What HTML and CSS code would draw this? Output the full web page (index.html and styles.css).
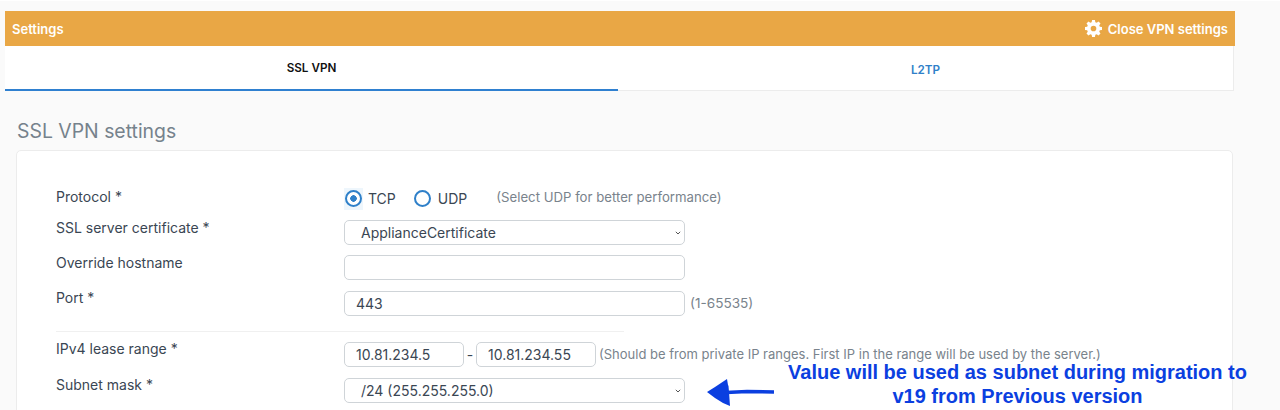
FILE: index.html
```html
<!DOCTYPE html>
<html lang="en">
<head>
<meta charset="utf-8">
<title>Settings</title>
<link rel="stylesheet" href="styles.css">
</head>
<body>
<div class="page">
  <header class="bar">
    <span class="bar-title">Settings</span>
    <span class="bar-close">
      <svg class="gear" viewBox="0 0 24 24" aria-hidden="true"><path fill-rule="evenodd" d="M10 0h4l.6 3.100 1.900.8 2.600-1.800 2.800 2.800-1.800 2.600.8 1.900 3.100.6v4l-3.100.6-.8 1.900 1.800 2.600-2.800 2.800-2.600-1.800-1.900.8L14 24h-4l-.6-3.100-1.900-.8-2.600 1.800-2.800-2.800 1.800-2.600-.8-1.900L0 14v-4l3.100-.6.8-1.900-1.800-2.600 2.800-2.800 2.600 1.800 1.900-.8zM12 8a4 4 0 1 0 0 8 4 4 0 0 0 0-8z"/></svg>
      Close VPN settings
    </span>
  </header>
  <nav class="tabs">
    <a class="tab tab-active">SSL VPN</a>
    <a class="tab tab-other">L2TP</a>
  </nav>
  <h1 class="title">SSL VPN settings</h1>
  <section class="card">
    <div class="row">
      <label class="label">Protocol *</label>
      <div class="control">
        <span class="radio-focus"><span class="radio radio-on"></span></span>
        <span class="radio-text">TCP</span>
        <span class="radio radio-second"></span>
        <span class="radio-text radio-text-wide">UDP</span>
        <span class="hint hint-protocol">(Select UDP for better performance)</span>
      </div>
    </div>
    <div class="row row-cert">
      <label class="label label-up">SSL server certificate *</label>
      <div class="control">
        <div class="field select">ApplianceCertificate<svg class="chev" viewBox="0 0 6 4"><path d="M.8.8 3 3l2.200-2.200" fill="none" stroke="#555" stroke-width="1"/></svg></div>
      </div>
    </div>
    <div class="row row-host">
      <label class="label label-up">Override hostname</label>
      <div class="control"><div class="field"></div></div>
    </div>
    <div class="row row-port">
      <label class="label label-higher">Port *</label>
      <div class="control"><div class="field field-text">443</div><span class="hint hint-port">(1-65535)</span></div>
    </div>
    <hr class="divider">
    <div class="row row-lease">
      <label class="label label-higher">IPv4 lease range *</label>
      <div class="control">
        <div class="field field-text field-small">10.81.234.5</div>
        <span class="dash">-</span>
        <div class="field field-text field-small">10.81.234.55</div>
        <span class="hint hint-lease">(Should be from private IP ranges. First IP in the range will be used by the server.)</span>
      </div>
    </div>
    <div class="row row-mask">
      <label class="label label-higher">Subnet mask *</label>
      <div class="control">
        <div class="field select">/24 (255.255.255.0)<svg class="chev" viewBox="0 0 6 4"><path d="M.8.8 3 3l2.200-2.200" fill="none" stroke="#555" stroke-width="1"/></svg></div>
      </div>
    </div>
  </section>
  <svg class="arrow" viewBox="0 0 68 27" aria-hidden="true"><path d="M0 13 8 8l6-4 6-4 1 6 .5 1 .5 6 .5 7 .5 7-7-3-8-5z" fill="#0b3fe0"/><path d="M19 13.500 40 12.500l27 .5" stroke="#0b3fe0" stroke-width="3.500" fill="none"/></svg>
  <p class="note">Value will be used as subnet during migration to<br>v19 from Previous version</p>
</div>
</body>
</html>
```
FILE: styles.css
```css
* { box-sizing: border-box; }
html, body { margin: 0; padding: 0; height: 410px; overflow: hidden; }
body { background: #fafafa; font-family: Inter, "Noto Sans", sans-serif; color: #3a4653; }
.page { position: relative; height: 410px; padding: 11px 45px 0 5px; border-top: 1px solid #fff; }
.bar { height: 35px; margin-top: -1px; background: #e9a745; color: #fff; display: flex; align-items: center; justify-content: space-between; padding: 0 7px; font-size: 13px; font-weight: 600; }
.bar-close { display: flex; align-items: center; gap: 6px; }
.gear { width: 17px; height: 17px; fill: #fff; }
.tabs { height: 45px; display: flex; background: #fff; border-right: 1px solid #ececec; border-bottom: 1px solid #ececec; margin-right: 1px; }
.tab { flex: 1; display: flex; align-items: center; justify-content: center; font-size: 11.700px; font-weight: 600; color: #2f80c9; }
.tab-other { padding-top: 3px; }
.tab-active { flex: 0 0 613px; color: #111; border-bottom: 2px solid #2f80d0; margin-bottom: -1px; padding-top: 1px; }
.title { margin: 28px 0 0 12px; height: 24px; line-height: 24px; font-size: 19.400px; font-weight: 400; color: #76828c; }
.card { margin: 7px 2px 0 11px; height: 270px; background: #fff; border: 1px solid #ececec; border-radius: 5px; padding: 35px 0 0 39px; }
.row { display: flex; align-items: center; height: 25px; font-size: 14px; }
.label { width: 288px; flex: none; padding-bottom: 4px; }
.label-up { padding-bottom: 10px; }
.label-higher { padding-bottom: 12px; }
.control { display: flex; align-items: center; }
.row-cert { margin-top: 9px; }
.row-host { margin-top: 10px; }
.row-port { margin-top: 11px; }
.row-lease { margin-top: 10px; }
.row-mask { margin-top: 11px; }
.divider { margin: 15px 0 0; width: 568px; border: 0; border-top: 1px solid #f0f0f0; }
.field { width: 341px; height: 25px; background: #fff; border: 1px solid #cfd4d8; border-radius: 5px; display: flex; align-items: center; position: relative; }
.field-text { padding-left: 11px; }
.select { padding-left: 16px; }
.field-small { width: 120px; }
.chev { position: absolute; right: 3px; top: 10px; width: 6px; height: 4px; }
.dash { width: 12px; text-align: center; }
.hint { color: #79838c; font-size: 13px; }
.hint-protocol { margin-left: 29px; padding-bottom: 4px; font-size: 13.200px; }
.hint-port { margin-left: 5px; padding-bottom: 2px; font-size: 13.600px; }
.hint-lease { margin-left: 3px; padding-bottom: 2px; }
.radio { display: inline-block; width: 17px; height: 17px; border: 2.500px solid #2f80c9; border-radius: 50%; background: #fff; }
.radio-on { background: radial-gradient(circle, #2f80c9 0 3px, #fff 3.500px); }
.radio-focus { width: 19px; height: 22px; display: flex; align-items: center; justify-content: center; background: #eef6fc; }
.radio-text { margin-left: 5px; }
.radio-text-wide { margin-left: 7px; }
.radio-second { margin-left: 18px; }
.arrow { position: absolute; left: 707px; top: 378px; width: 68px; height: 27px; }
.note { position: absolute; left: 740px; top: 359px; width: 555px; margin: 0; text-align: center; font-family: "Liberation Sans", Arial, sans-serif; font-weight: 700; font-size: 20px; line-height: 24px; color: #0b3fe0; }
```
